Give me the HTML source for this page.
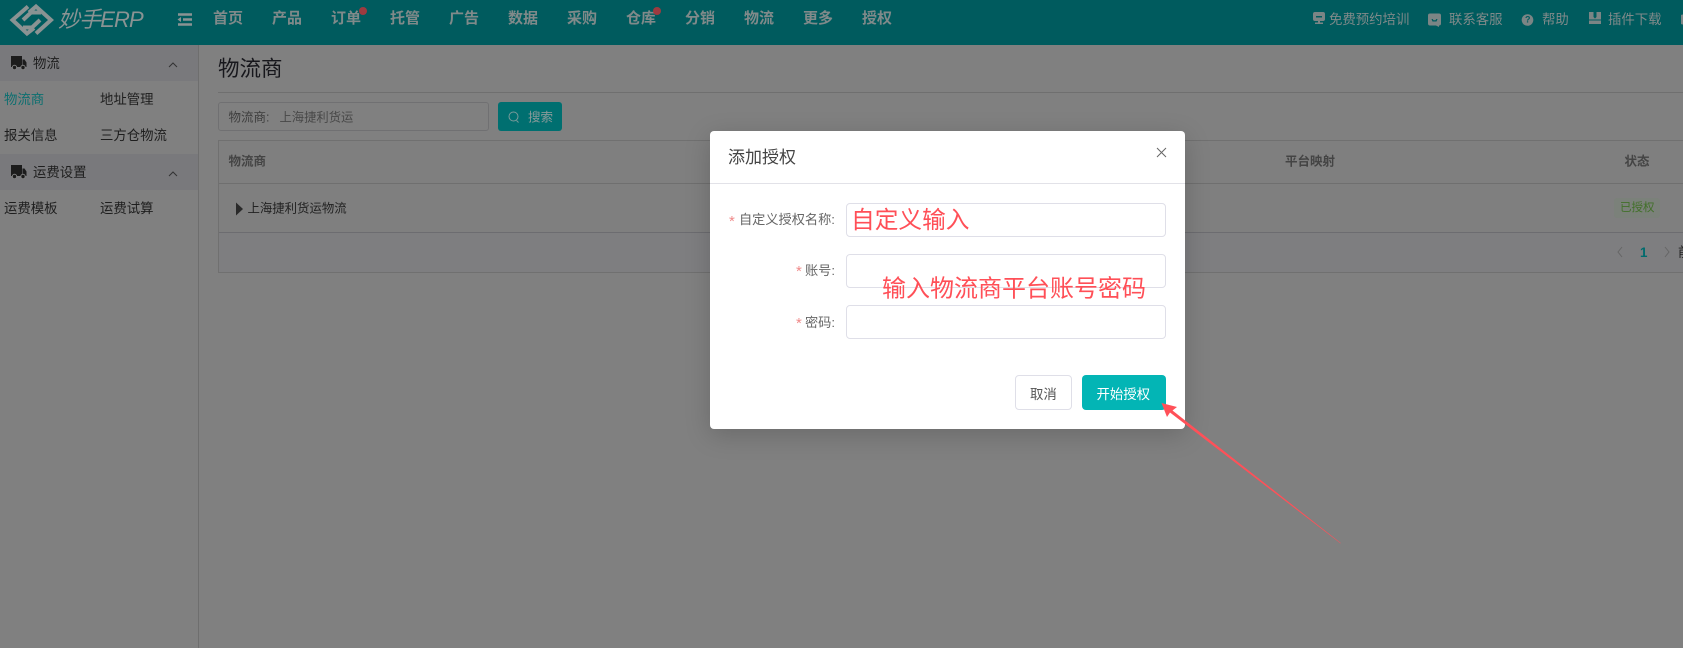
<!DOCTYPE html>
<html lang="zh"><head><meta charset="utf-8"><title>妙手ERP</title>
<style>
html,body{margin:0;padding:0}
body{width:1683px;height:648px;overflow:hidden;background:#808080;position:relative;font-family:"Liberation Sans","Noto Sans CJK SC",sans-serif;color:#1c1c1c}
.t{position:absolute;white-space:nowrap;line-height:1.2;transform:translateY(-50%)}
.b{position:absolute;box-sizing:border-box}
.n{font-size:15px;font-weight:700;color:#808a8a;top:19px}
.r{font-size:13.4px;color:#808a8a;top:20px}
.s{font-size:13.4px;color:#1e1e1e}
.h{font-size:12.5px;font-weight:700;color:#444;top:162px}
.l{font-size:13.2px;color:#666}
.a{font-size:15px;color:#f08a8a}
.i{left:846px;width:320px;height:34px;border:1px solid #dfdfe8;border-radius:4px;background:#fff}
.red{color:#ff4f57;font-family:"Noto Sans CJK SC",sans-serif}
svg{position:absolute;overflow:visible}
</style></head><body>

<div class="b" style="left:0;top:0;width:1683px;height:45px;background:#005b5e"></div>
<svg style="left:0;top:0" width="200" height="45" fill="none" stroke="#8a9393" stroke-width="4">
<path d="M28 6.500L12.500 20L27 33.500L34 28M23 20L31 12.500L41 12.500"/>
<path d="M36 33.500L51 20L36 6.500L29 12.500M40 20L32 27.500L23 27.500"/>
<path d="M178 14.500H192M183 19.500H192M178 24.500H192" stroke-width="2.600"/>
<path d="M181 17L177.500 19.500L181 22Z" fill="#8a9393" stroke="none"/>
</svg>
<span class="t" style="left:58px;top:20px;font-size:22px;font-style:italic;color:#8a9393;letter-spacing:-.9px">妙手ERP</span>

<span class="t n" style="left:213px">首页</span><span class="t n" style="left:272px">产品</span><span class="t n" style="left:331px">订单</span><span class="t n" style="left:390px">托管</span><span class="t n" style="left:449px">广告</span><span class="t n" style="left:508px">数据</span><span class="t n" style="left:567px">采购</span><span class="t n" style="left:626px">仓库</span><span class="t n" style="left:685px">分销</span><span class="t n" style="left:744px">物流</span><span class="t n" style="left:803px">更多</span><span class="t n" style="left:862px">授权</span>
<div class="b" style="left:358.500px;top:7px;width:8px;height:8px;border-radius:50%;background:#9c3b40"></div>
<div class="b" style="left:653px;top:7px;width:8px;height:8px;border-radius:50%;background:#9c3b40"></div>

<svg style="left:0;top:0" width="1683" height="45" fill="#7b8585">
<path d="M1315 12h8a2 2 0 0 1 2 2v5a2 2 0 0 1-2 2h-3v1.500h3v1.500h-8v-1.500h3v-1.500h-3a2 2 0 0 1-2-2v-5a2 2 0 0 1 2-2zM1316 16v1.500h6v-1.500z" fill-rule="evenodd"/>
<path d="M1430 13.500h9a2 2 0 0 1 2 2v8a2 2 0 0 1-2 2v1.500l-3-1.500h-6a2 2 0 0 1-2-2v-8a2 2 0 0 1 2-2zM1431.500 19l1 2.500h4l1-2.500-1.200 0-.8 1.300h-2l-.8-1.300z" fill-rule="evenodd"/>
<circle cx="1527.500" cy="20" r="5.800"/>
<path d="M1589 12h4.500v5l1.500 1.500 1.500-1.500v-5h4.500v7.500h-12zM1589 20.500h12v3.500h-12z"/>
<path d="M1681 15a5 5 0 0 1 2 -.5v10a5 5 0 0 1-2-.5z"/>
</svg>
<span class="t" style="left:1525px;top:20px;font-size:9px;font-weight:700;color:#005b5e">?</span>
<span class="t r" style="left:1329px">免费预约培训</span><span class="t r" style="left:1449px">联系客服</span><span class="t r" style="left:1542px">帮助</span><span class="t r" style="left:1608px">插件下载</span>

<div class="b" style="left:0;top:45px;width:198px;height:36px;background:#79797c"></div>
<div class="b" style="left:0;top:154px;width:198px;height:36px;background:#79797c"></div>
<div class="b" style="left:198px;top:45px;width:1px;height:603px;background:#6e6e6e"></div>
<svg style="left:0;top:0" width="198" height="200" fill="#1c1c1c">
<path d="M11 56h11v11h-11zM22.500 59.500h2l2 3v4.500h-4z"/><circle cx="14.500" cy="67.500" r="2.200" stroke="#808080"/><circle cx="23" cy="67.500" r="2.200" stroke="#808080"/>
<g transform="translate(0 109)"><path d="M11 56h11v11h-11zM22.500 59.500h2l2 3v4.500h-4z"/><circle cx="14.500" cy="67.500" r="2.200" stroke="#808080"/><circle cx="23" cy="67.500" r="2.200" stroke="#808080"/></g>
<path d="M169 67l4-4 4 4M169 176l4-4 4 4" fill="none" stroke="#333" stroke-width="1"/>
</svg>
<span class="t s" style="left:33px;top:64px">物流</span>
<span class="t s" style="left:33px;top:173px">运费设置</span>
<span class="t s" style="left:4px;top:100px;color:#0d6f70">物流商</span><span class="t s" style="left:100px;top:100px">地址管理</span>
<span class="t s" style="left:4px;top:136px">报关信息</span><span class="t s" style="left:100px;top:136px">三方仓物流</span>
<span class="t s" style="left:4px;top:209px">运费模板</span><span class="t s" style="left:100px;top:209px">运费试算</span>

<span class="t" style="left:218px;top:70px;font-size:21.500px;color:#17171c">物流商</span>
<div class="b" style="left:218px;top:92px;width:1465px;height:1px;background:#6f6f6f"></div>
<div class="b" style="left:218px;top:102px;width:271px;height:29px;border:1px solid #707072;border-radius:3px"></div>
<span class="t" style="left:228.500px;top:118px;font-size:12.500px;color:#3e3e3e">物流商:</span>
<span class="t" style="left:279.500px;top:118px;font-size:12.300px;color:#484848">上海捷利货运</span>
<div class="b" style="left:498px;top:102px;width:64px;height:29px;background:#006f70;border-radius:3px"></div>
<svg style="left:0;top:0" width="600" height="140" fill="none" stroke="#7a9a9a" stroke-width="1"><circle cx="513.500" cy="116.500" r="4.500"/><path d="M516.500 120.500l2 2"/></svg>
<span class="t" style="left:528px;top:118px;font-size:12.500px;color:#8a9a9a">搜索</span>

<div class="b" style="left:218px;top:140px;width:1465px;height:133px;border:1px solid #707070;border-right:none;background:#7f7f7f"></div>
<div class="b" style="left:219px;top:183px;width:1464px;height:1px;background:#6f6f6f"></div>
<div class="b" style="left:219px;top:184px;width:1464px;height:49px;background:#7f7f7f;border-bottom:1px solid #6c6c70"></div>
<div class="b" style="left:219px;top:233px;width:1464px;height:39px;background:#7e7e80"></div>
<span class="t h" style="left:228.500px">物流商</span><span class="t h" style="left:1285px">平台映射</span><span class="t h" style="left:1624.500px">状态</span>
<svg style="left:0;top:0" width="1683" height="270" fill="none"><path d="M236 202.500L243 209L236 215.500Z" fill="#2a2a2a"/><path d="M1622 247l-4 5 4 5M1665 247l4 5-4 5" stroke="#666"/></svg>
<span class="t" style="left:247.500px;top:209px;font-size:12.400px;color:#222">上海捷利货运物流</span>
<div class="b" style="left:1614px;top:198px;width:46px;height:20px;background:#7b817a;border-radius:3px"></div>
<span class="t" style="left:1620px;top:208.500px;font-size:11.500px;color:#42702a">已授权</span>
<span class="t" style="left:1640px;top:252.500px;font-size:13.400px;font-weight:700;color:#006b6d">1</span>
<span class="t" style="left:1678px;top:252.500px;font-size:13.400px;color:#222">前</span>

<div class="b" style="left:710px;top:131px;width:475px;height:298px;background:#fff;border-radius:4px;box-shadow:0 6px 26px rgba(0,0,0,.18)"></div>
<div class="b" style="left:710px;top:183px;width:475px;height:1px;background:#e2e2e8"></div>
<span class="t" style="left:728px;top:158px;font-size:17px;color:#444">添加授权</span>
<svg style="left:0;top:0" width="1200" height="170" fill="none" stroke="#666" stroke-width="1"><path d="M1157 148l9 9M1166 148l-9 9"/></svg>

<span class="t a" style="left:729px;top:222px">*</span><span class="t l" style="left:739px;top:220px">自定义授权名称:</span>
<span class="t a" style="left:796px;top:272px">*</span><span class="t l" style="left:805px;top:271px">账号:</span>
<span class="t a" style="left:796px;top:324px">*</span><span class="t l" style="left:805px;top:323px">密码:</span>
<div class="b i" style="top:203px"></div><div class="b i" style="top:254px"></div><div class="b i" style="top:305px"></div>
<span class="t red" style="left:851px;top:218px;font-size:23.700px">自定义输入</span>
<span class="t red" style="left:882px;top:287px;font-size:24px">输入物流商平台账号密码</span>

<div class="b" style="left:1015px;top:375px;width:57px;height:35px;border:1px solid #dfdfe8;border-radius:4px;background:#fff"></div>
<span class="t" style="left:1030px;top:394.500px;font-size:13.400px;color:#555">取消</span>
<div class="b" style="left:1082px;top:375px;width:84px;height:35px;border-radius:4px;background:#03b5b5"></div>
<span class="t" style="left:1096.500px;top:394.500px;font-size:13.400px;color:#fff">开始授权</span>

<svg style="left:0;top:0" width="1683" height="648"><path d="M1161.500 403L1177 407L1172.500 410.500L1340.700 543L1340.500 543.400L1170 412.500L1167 417Z" fill="#ff5058"/></svg>
</body></html>
